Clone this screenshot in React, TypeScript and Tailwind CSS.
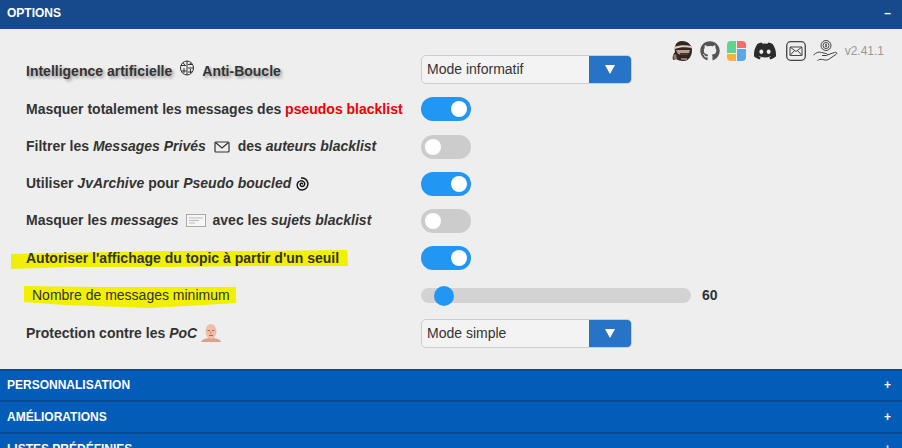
import { FaDiscord, FaGithub } from 'react-icons/fa';
import type { ReactNode } from 'react';

function Toggle({ on }: { on?: boolean }) {
  return (
    <div className={`flex h-6 w-[50px] items-center rounded-full px-1 ${on ? 'justify-end bg-[#2196f3]' : 'justify-start bg-[#cccccc]'}`}>
      <div className="size-4 rounded-full bg-white" />
    </div>
  );
}

function Select({ label, className = '' }: { label: string; className?: string }) {
  return (
    <div className={`flex h-[29px] w-[211px] overflow-hidden rounded-[5px] border border-[#cccccc] bg-[#f3f3f3] ${className}`}>
      <div className="flex-1 pl-[5px] text-[14px] leading-[27px] text-[#333333]">{label}</div>
      <div className="flex w-[42px] items-center justify-center bg-[#2773c6]">
        <svg width="10" height="9" viewBox="0 0 10 9"><path d="M0 0h10L5 9z" fill="#fff" /></svg>
      </div>
    </div>
  );
}

function Row({ label, children, className = '' }: { label: ReactNode; children: ReactNode; className?: string }) {
  return (
    <div className={`flex items-center ${className}`}>
      <div className="w-[395px] shrink-0 text-[14px] font-bold text-[#333333]">{label}</div>
      {children}
    </div>
  );
}

function Section({ title, className = 'h-[32px]' }: { title: string; className?: string }) {
  return (
    <div className={`flex shrink-0 items-center justify-between border-t-[2px] border-[#0a4a94] bg-[#045cb9] pl-[7px] pr-[11px] text-[12px] font-bold text-white ${className}`}>
      <span>{title}</span>
      <span>+</span>
    </div>
  );
}

// trait de surligneur jaune, passe derriere le texte
function Marker({ width, height, top, left, points }: { width: number; height: number; top: number; left: number; points: string }) {
  return (
    <svg
      className="absolute"
      style={{ top, left }}
      width={width}
      height={height}
      viewBox={`0 0 ${width} ${height}`}
    >
      <polygon points={points} fill="#f0f000" />
    </svg>
  );
}

function BrainIcon() {
  return (
    <svg className="mb-[7px]" width="14" height="16" viewBox="0 0 14 16" fill="none" stroke="#333" strokeWidth="1">
      <ellipse cx="7" cy="8" rx="6.500" ry="7" />
      <path d="M7 1v14M1 5.500h5M8 4.500h5M1.500 11h5M8 8h5.500M8 12h4M3 2.500l2 3M11 2.500l-1.500 2M4 8v5M10.500 9v4" />
    </svg>
  );
}

function SpiralIcon() {
  return (
    <svg width="14" height="14" viewBox="0 0 14 14" fill="none" stroke="#111" strokeWidth="1.400">
      <path d="M7.300 7.400c.7-.8-.5-1.700-1.500-1-1.200.9-.5 3 1.300 3.100 2.300.1 3.400-2.600 2-4.400-1.700-2-5.300-1.700-6.500 1C1.300 9.400 3.500 13 7 13c3.900 0 6.700-3.900 5.700-7.500C11.800 2.600 9 .8 6 1" />
    </svg>
  );
}

function MailIcon() {
  return (
    <svg width="16" height="12" viewBox="0 0 16 12" fill="none" stroke="#333" strokeWidth="1.200">
      <rect x="1" y="1" width="14" height="10" rx="1" />
      <path d="M1.500 1.500L8 7l6.500-5.500" />
    </svg>
  );
}

function SubjectIcon() {
  return (
    <svg width="20" height="13" viewBox="0 0 20 13" fill="none">
      <rect x=".5" y=".5" width="19" height="12" fill="#f6f6f6" stroke="#aaaaaa" />
      <path d="M3 4h14M3 6.500h10M3 9h6" stroke="#bbbbbb" />
    </svg>
  );
}

function BaldHead() {
  return (
    <svg width="20" height="18" viewBox="0 0 20 18">
      <path d="M0 18c1-3 5-4 10-4s9 1 10 4z" fill="#d8a28c" />
      <ellipse cx="10" cy="7.500" rx="5.500" ry="7.500" fill="#efbda8" />
      <path d="M6.500 6.500h2.500M11 6.500h2.500M8 11.500h4" stroke="#a56a55" strokeWidth="1" />
      <path d="M9.800 7.500v2.500" stroke="#c98a72" />
    </svg>
  );
}

function Avatar() {
  return (
    <svg width="21" height="21" viewBox="0 0 21 21">
      <path d="M10 0c6 0 10 4 10 9 0 6-3 11-9 11-3 0-5-1-7-2l-3 1c-1-3 0-6 2-8C2 5 4 0 10 0z" fill="#2f2725" />
      <path d="M2 6c5-2 12-2 17-1l1 2c-6-1-12-1-17 1z" fill="#e0cdbf" />
      <path d="M4 9h14l-1 3h-5l-2 2-4-1z" fill="#c39a88" />
      <path d="M8 12h8v2H8z" fill="#4a3833" />
      <path d="M1 14l3-1 1 5-3 1zM9 17h6v2H9z" fill="#8f7367" />
    </svg>
  );
}

function GridLogo() {
  return (
    <svg width="19" height="20" viewBox="0 0 19 20">
      <path d="M4 0h5v12H0V4a4 4 0 0 1 4-4z" fill="#5dd68c" />
      <path d="M10 0h5a4 4 0 0 1 4 4v3h-9z" fill="#ef6f66" />
      <path d="M10 8h9v8a4 4 0 0 1-4 4h-5z" fill="#5aa9e6" />
      <path d="M0 13h9v7H4a4 4 0 0 1-4-4z" fill="#f7b03c" />
    </svg>
  );
}

function BoxedMail() {
  return (
    <svg className="ml-[2px]" width="20" height="20" viewBox="0 0 20 20" fill="none" stroke="#444" strokeWidth="1">
      <rect x=".7" y=".7" width="18.600" height="18.600" rx="4" strokeWidth="1.300" />
      <rect x="4" y="6" width="12" height="8.500" rx=".5" />
      <path d="M4 6l6 4.500L16 6M4 14.500l4.500-5M16 14.500l-4.500-5" />
    </svg>
  );
}

function HandCoin() {
  return (
    <svg width="25" height="22" viewBox="0 0 25 22" fill="none" stroke="#444" strokeWidth="1">
      <circle cx="13" cy="5.500" r="5" />
      <circle cx="13" cy="5.500" r="3" />
      <path d="M13 4v3" strokeWidth="1.500" />
      <path d="M.5 15c3-2.500 5-3.500 8-2.500l4.500 1c2 .3 2 2 0 2H9M14 15l7.500-2.500c2-.5 3 .5 2 1.500l-8 5.500c-2 1-4 .5-6 0-2-.5-3.500 0-5 1" />
    </svg>
  );
}

export default function App() {
  return (
    <div className="flex h-[448px] w-[902px] flex-col overflow-hidden bg-[#eeeeee] font-['Liberation_Sans',Arial,sans-serif]">
      <div className="flex h-[29px] shrink-0 items-center justify-between bg-[#174a8c] pb-[3px] pl-[7px] pr-[11px] text-[12px] font-bold text-white">
        <span>OPTIONS</span>
        <span>–</span>
      </div>

      <div className="relative flex h-[340px] shrink-0 flex-col pl-[26px] pt-[24px]">
        {/* barre d'icones en haut a droite */}
        <div className="absolute right-[18px] top-[10px] flex items-center gap-[7px]">
          <Avatar />
          <FaGithub className="size-5 text-[#555555]" />
          <GridLogo />
          <FaDiscord className="size-6 text-[#2b2b2b]" />
          <BoxedMail />
          <HandCoin />
          <span className="text-[12px] text-[#999999]">v2.41.1</span>
        </div>

        <Row className="h-[37px]" label={
          <span className="flex items-center gap-[8px] [text-shadow:2px_2px_3px_#999]">
            Intelligence artificielle <BrainIcon /> Anti-Boucle
          </span>
        }>
          <Select label="Mode informatif" className="-mt-[4px]" />
        </Row>
        <Row className="h-[38px]" label={<>Masquer totalement les messages des <span className="text-[#f00000]">pseudos blacklist</span></>}>
          <Toggle on />
        </Row>
        <Row className="h-[37px]" label={
          <span className="flex items-center gap-[8px]">
            <span>Filtrer les <i>Messages Privés</i></span> <MailIcon /> <span>des <i>auteurs blacklist</i></span>
          </span>
        }>
          <Toggle />
        </Row>
        <Row className="h-[37px]" label={
          <span className="flex items-center gap-[4px]">
            <span>Utiliser <i>JvArchive</i> pour <i>Pseudo boucled</i></span> <SpiralIcon />
          </span>
        }>
          <Toggle on />
        </Row>
        <Row className="h-[37px]" label={
          <span className="flex items-center gap-[7px]">
            <span>Masquer les <i>messages</i></span> <SubjectIcon /> <span>avec les <i>sujets blacklist</i></span>
          </span>
        }>
          <Toggle />
        </Row>
        <Row className="h-[38px]" label={
          <span className="relative inline-block">
            <Marker width={337} height={19} top={2} left={-15} points="0,4 50,3 100,2 160,1 250,1 336,0 337,16 250,16 160,17 60,17 0,19" />
            <span className="relative">Autoriser l'affichage du topic à partir d'un seuil</span>
          </span>
        }>
          <Toggle on />
        </Row>
        <Row className="h-[37px]" label={
          <span className="relative ml-[6px] inline-block font-normal">
            <Marker width={212} height={23} top={0} left={-8} points="0,1 70,2 212,2 212,18 180,20 125,23 40,20 0,17" />
            <span className="relative">Nombre de messages minimum</span>
          </span>
        }>
          <div className="relative h-[15px] w-[270px] rounded-full bg-[#d3d3d3]">
            <div className="absolute left-[13px] top-[-2.500px] size-5 rounded-full bg-[#2196f3]" />
          </div>
          <span className="ml-[11px] text-[14px] font-bold text-[#333333]">60</span>
        </Row>
        <Row className="h-[38px]" label={
          <span className="flex items-center gap-[4px]">
            <span>Protection contre les <i>PoC</i></span> <BaldHead />
          </span>
        }>
          <Select label="Mode simple" />
        </Row>
      </div>

      <Section title="PERSONNALISATION" className="h-[31px] pb-[1px]" />
      <Section title="AMÉLIORATIONS" />
      <Section title="LISTES PRÉDÉFINIES" />
    </div>
  );
}
